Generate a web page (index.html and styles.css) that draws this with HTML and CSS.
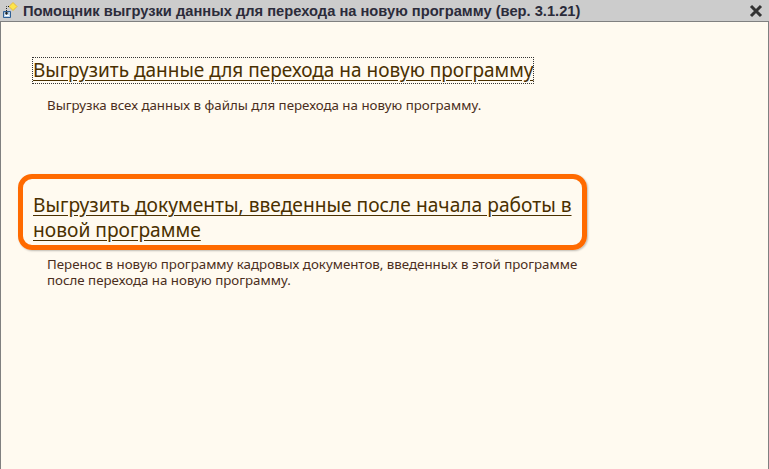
FILE: index.html
```html
<!DOCTYPE html>
<html lang="ru">
<head>
    <meta charset="UTF-8">
    <meta name="viewport" content="width=device-width, initial-scale=1.0">

    <link rel="stylesheet" href="styles.css">

    <title>Помощник выгрузки данных</title>
</head>
<body>
    <div class="okno">
        <div class="zagolovok">
            <svg class="ikonka" width="20" height="20" viewBox="0 0 20 20">
                <path d="M11 1.500l4 4-4 4-4-4z" fill="#fde54a" stroke="#e8b93a" stroke-width="1"/>
                <path d="M1.500 10.500h7v6h-7z" fill="#bcd6ee" stroke="#2f5f94"/>
                <path d="M3 14.500h4" stroke="#ffffff"/>
                <path d="M7 5.500H4.500v7" fill="none" stroke="#222" stroke-dasharray="1 1"/>
                <path d="M2.500 11.500h4l-2 2.500z" fill="#222"/>
            </svg>
            <span class="zagolovok-tekst">Помощник выгрузки данных для перехода на новую программу (вер. 3.1.21)</span>
            <svg class="zakryt" width="14" height="14" viewBox="0 0 14 14">
                <path d="M2 2l10 10M12 2L2 12" stroke="#333" stroke-width="3"/>
            </svg>
        </div>

        <div class="soderzhimoe">
            <div class="punkt punkt-pervyi">
                <a class="ssylka ssylka-fokus" href="#">Выгрузить данные для перехода на новую программу</a>
                <p class="opisanie">Выгрузка всех данных в файлы для перехода на новую программу.</p>
            </div>

            <div class="punkt punkt-vtoroi">
                <a class="ssylka ssylka-shire" href="#">Выгрузить документы, введенные после начала работы в новой программе</a>
                <div class="vydelenie"></div>
                <p class="opisanie">Перенос в новую программу кадровых документов, введенных в этой программе после перехода на новую программу.</p>
            </div>
        </div>
    </div>
</body>
</html>
```

FILE: styles.css
```css
html, body {
    margin: 0;
    height: 100%;
}

body {
    overflow: hidden;
}

.okno {
    display: flex;
    flex-direction: column;
    height: 469px;
    background-color: #cccccc;
}

.zagolovok {
    display: flex;
    align-items: center;
    height: 21px;
    flex-shrink: 0;
    padding-left: 2px;
    padding-right: 6px;
}

.ikonka {
    flex-shrink: 0;
}

.zagolovok-tekst {
    flex-grow: 1;
    margin-left: 1px;
    font-family: "Liberation Sans", sans-serif;
    font-weight: bold;
    font-size: 14.7px;
    color: #2b2b3a;
}

.soderzhimoe {
    flex-grow: 1;
    padding-left: 32px;
    background-color: #fffaf0;
    border: 1px solid #808080;
    border-bottom: none;
}

.punkt {
    position: relative;
    width: 546px;
}

.punkt-pervyi {
    padding-top: 36px;
}

.punkt-vtoroi {
    padding-top: 79px;
}

.ssylka {
    font-family: "Noto Sans", sans-serif;
    font-size: 19px;
    line-height: 25px;
    color: #4a3000;
    text-decoration: underline;
    text-underline-offset: 3px;
}

.ssylka-shire {
    font-size: 19.2px;
}

.ssylka-fokus {
    outline: 1px dotted #333333;
    display: inline-block;
    white-space: nowrap;
}

.opisanie {
    margin: 14px 0 0 14px;
    font-family: "Noto Sans", sans-serif;
    font-size: 13.3px;
    line-height: 16px;
    color: #4b2e20;
}

.vydelenie {
    position: absolute;
    left: -15px;
    top: 61px;
    width: 559px;
    height: 66px;
    border: 5px solid #ff6a00;
    border-radius: 14px;
    box-shadow: 1px 1px 2px rgba(0, 0, 0, 0.25);
}
```
